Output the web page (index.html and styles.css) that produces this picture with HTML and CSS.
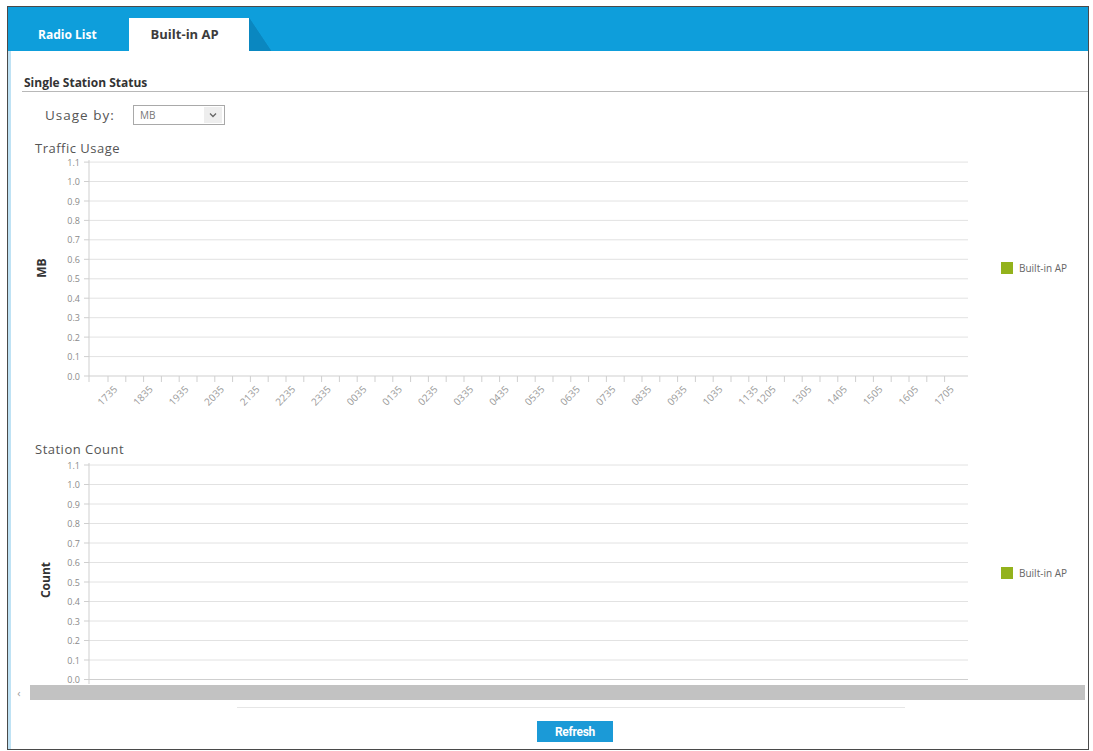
FILE: index.html
```html
<!DOCTYPE html>
<html lang="en">
<head>
  <meta charset="UTF-8">
  <title>Built-in AP</title>
  <link rel="stylesheet" href="styles.css">
</head>
<body>

  <div class="panel">
    <div class="tabs">
      <div class="tab">Radio List</div>
      <div class="tab active">Built-in AP</div>
      <div class="tab-shadow"></div>
    </div>

    <div class="section-title">Single Station Status</div>

    <div class="usage-row">
      <span class="usage-label">Usage by:</span>
      <div class="select">
        <span>MB</span>
        <span class="select-arrow">
          <svg width="8" height="6" viewBox="0 0 8 6"><path d="M1 1.5 L4 4.5 L7 1.5" fill="none" stroke="#666" stroke-width="1.3"/></svg>
        </span>
      </div>
    </div>

    <div class="chart-title">Traffic Usage</div>
    <svg class="chart" id="trafficChart" width="1080" height="287"></svg>

    <div class="chart-title">Station Count</div>
    <div class="chart-clip">
      <svg class="chart" id="countChart" width="1080" height="260"></svg>
    </div>

    <div class="scroll-row">
      <span class="scroll-arrow">&#8249;</span>
      <div class="scroll-bar"></div>
    </div>

    <div class="faint-line"></div>

    <button class="refresh">Refresh</button>
  </div>

  <script>
    const times = [
      ['1735', 0], ['1835', 1], ['1935', 2], ['2035', 3], ['2135', 4], ['2235', 5],
      ['2335', 6], ['0035', 7], ['0135', 8], ['0235', 9], ['0335', 10], ['0435', 11],
      ['0535', 12], ['0635', 13], ['0735', 14], ['0835', 15], ['0935', 16], ['1035', 17],
      ['1135', 18], ['1205', 18.5], ['1305', 19.5], ['1405', 20.5], ['1505', 21.5],
      ['1605', 22.5], ['1705', 23.5]
    ];

    // svg x = page x - 8
    const axisX = 81, gridEnd = 960, hourW = 35.6, firstTick = 100;

    function buildChart(id, y0, step, unit, unitX, unitY, legendY, withTimes) {
      const svg = document.getElementById(id);
      let s = '';
      for (let k = 0; k <= 11; k++) {
        const y = (y0 - k * step).toFixed(1);
        s += `<line x1="${axisX}" y1="${y}" x2="${gridEnd}" y2="${y}" class="${k === 0 ? 'axis' : 'grid'}"/>`;
        s += `<line x1="${axisX - 5}" y1="${y}" x2="${axisX}" y2="${y}" class="axis"/>`;
        s += `<text x="${axisX - 9}" y="${(+y + 3.5).toFixed(1)}" class="ylab">${(k / 10).toFixed(1)}</text>`;
      }
      s += `<line x1="${axisX}" y1="${y0 - 11 * step - 2}" x2="${axisX}" y2="${y0 + 6}" class="axis"/>`;

      if (withTimes) {
        for (let i = 0; i < 48; i++) {
          const x = (firstTick + i * hourW / 2).toFixed(1);
          s += `<line x1="${x}" y1="${y0}" x2="${x}" y2="${y0 + 6}" class="axis"/>`;
        }
        times.forEach(([t, h]) => {
          const x = firstTick + h * hourW + 10;
          const y = y0 + 14;
          s += `<text x="${x}" y="${y}" class="xlab" transform="rotate(-45 ${x} ${y})">${t}</text>`;
        });
      }

      s += `<text x="${unitX}" y="${unitY}" class="unit" transform="rotate(-90 ${unitX} ${unitY})">${unit}</text>`;
      s += `<rect x="993" y="${legendY}" width="12" height="12" fill="#93b21c"/>`;
      s += `<text x="1011" y="${legendY + 10}" class="legend">Built-in AP</text>`;
      svg.innerHTML = s;
    }

    buildChart('trafficChart', 221, 19.45, 'MB', 38, 113, 107, true);
    buildChart('countChart', 223.5, 19.5, 'Count', 42, 124, 111, false);
  </script>

</body>
</html>
```

FILE: styles.css
```css
* {
  box-sizing: border-box;
}

body {
  margin: 0;
  background: #fff;
  font-family: 'Open Sans', sans-serif;
  color: #444;
}

.panel {
  margin: 6px 4px 0 7px;
  height: 744px;
  border: 1px solid #4a4a4a;
  box-shadow: inset 3px 0 0 #bfe2f4;
}

.tabs {
  height: 44px;
  background: #0e9edb;
  display: flex;
  align-items: flex-end;
  padding-left: 14px;
}

.tab {
  height: 33px;
  line-height: 33px;
  padding: 0 32px 0 16px;
  font-size: 12px;
  font-weight: 700;
  color: #fff;
}

.tab.active {
  width: 120px;
  padding: 0 0 0 22px;
  background: #fff;
  color: #3c3c3c;
  font-size: 13px;
}

.tab-shadow {
  width: 22px;
  height: 33px;
  background: linear-gradient(to top right, #0a87c0 50%, transparent 52%);
}

.section-title {
  margin-left: 14px;
  padding: 25px 0 1px 2px;
  line-height: 14px;
  font-size: 12px;
  font-weight: 700;
  color: #333;
  border-bottom: 1px solid #b8b8b8;
}

.usage-row {
  display: flex;
  align-items: center;
  margin-top: 13px;
  height: 20px;
}

.usage-label {
  margin-left: 37px;
  width: 88px;
  font-size: 13.5px;
  letter-spacing: 1px;
  color: #555;
}

.select {
  width: 92px;
  height: 20px;
  border: 1px solid #a9a9a9;
  display: flex;
  align-items: center;
  justify-content: space-between;
  padding-left: 6px;
  font-size: 10px;
  color: #777;
}

.select-arrow {
  width: 18px;
  height: 16px;
  margin-right: 2px;
  background: #eee;
  display: flex;
  align-items: center;
  justify-content: center;
}

.chart-title {
  margin: 16px 0 0 27px;
  line-height: 14px;
  font-size: 13px;
  letter-spacing: 0.5px;
  color: #555;
}

.chart {
  display: block;
}

.chart + .chart-title {
  margin-top: 0;
}

.chart-clip {
  height: 228px;
  overflow: hidden;
}

.chart .grid {
  stroke: #e2e2e2;
  stroke-width: 1;
}

.chart .axis {
  stroke: #cfcfcf;
  stroke-width: 1;
}

.chart .ylab {
  font-family: 'Open Sans', sans-serif;
  font-size: 9px;
  fill: #8a8a8a;
  text-anchor: end;
}

.chart .xlab {
  font-family: 'Open Sans', sans-serif;
  font-size: 10px;
  fill: #9a9a9a;
  text-anchor: end;
}

.chart .unit {
  font-family: 'Open Sans', sans-serif;
  font-size: 12px;
  font-weight: 700;
  fill: #333;
  text-anchor: middle;
}

.chart .legend {
  font-family: 'Open Sans', sans-serif;
  font-size: 10px;
  fill: #666;
}

.scroll-row {
  display: flex;
  align-items: center;
  height: 15px;
  margin-top: 1px;
}

.scroll-arrow {
  width: 22px;
  text-align: center;
  font-size: 11px;
  line-height: 15px;
  color: #999;
}

.scroll-bar {
  flex: 1;
  height: 15px;
  margin-right: 3px;
  background: #c2c2c2;
}

.faint-line {
  height: 1px;
  margin: 7px 183px 0 229px;
  background: #e6e6e6;
}

.refresh {
  display: block;
  margin: 13px 0 0 529px;
  width: 76px;
  height: 21px;
  padding: 0;
  border: none;
  background: #1b9ad7;
  color: #fff;
  font-family: 'Liberation Sans Narrow', 'Roboto', sans-serif;
  font-size: 12px;
  font-weight: 700;
  letter-spacing: -0.3px;
}
```
